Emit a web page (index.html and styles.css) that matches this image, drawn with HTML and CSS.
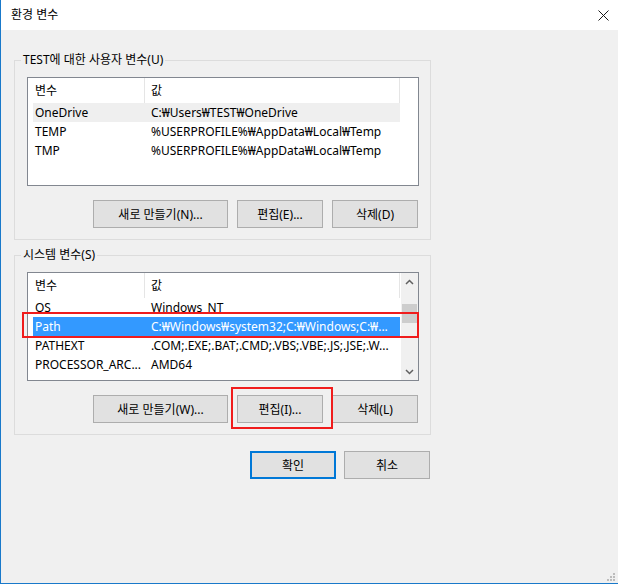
FILE: index.html
```html
<!DOCTYPE html>
<html lang="ko">
<head>
    <meta charset="UTF-8">
    <title>환경 변수</title>
    <link rel="stylesheet" href="styles.css">
</head>
<body>
    <div class="window">
        <div class="titlebar">
            <span class="title">환경 변수</span>
            <svg class="close" width="11" height="11" viewBox="0 0 11 11">
                <path d="M0.5 0.5 L10.5 10.5 M10.5 0.5 L0.5 10.5" stroke="#1a1a1a" stroke-width="1" fill="none"/>
            </svg>
        </div>
        <div class="content">
            <fieldset class="group">
                <legend>TEST에 대한 사용자 변수(U)</legend>
                <div class="list">
                    <div class="list-main">
                        <div class="head">
                            <span class="c1">변수</span>
                            <span class="c2">값</span>
                        </div>
                        <div class="row inactive">
                            <span class="c1">OneDrive</span>
                            <span class="c2">C:₩Users₩TEST₩OneDrive</span>
                        </div>
                        <div class="row">
                            <span class="c1">TEMP</span>
                            <span class="c2">%USERPROFILE%₩AppData₩Local₩Temp</span>
                        </div>
                        <div class="row">
                            <span class="c1">TMP</span>
                            <span class="c2">%USERPROFILE%₩AppData₩Local₩Temp</span>
                        </div>
                    </div>
                </div>
                <div class="btn-row">
                    <button class="btn wide">새로 만들기(N)...</button>
                    <button class="btn">편집(E)...</button>
                    <button class="btn">삭제(D)</button>
                </div>
            </fieldset>

            <fieldset class="group">
                <legend>시스템 변수(S)</legend>
                <div class="list">
                    <div class="list-main">
                        <div class="head">
                            <span class="c1">변수</span>
                            <span class="c2">값</span>
                        </div>
                        <div class="row">
                            <span class="c1">OS</span>
                            <span class="c2">Windows_NT</span>
                        </div>
                        <div class="row selected">
                            <span class="c1">Path</span>
                            <span class="c2">C:₩Windows₩system32;C:₩Windows;C:₩...</span>
                        </div>
                        <div class="row">
                            <span class="c1">PATHEXT</span>
                            <span class="c2">.COM;.EXE;.BAT;.CMD;.VBS;.VBE;.JS;.JSE;.W...</span>
                        </div>
                        <div class="row">
                            <span class="c1">PROCESSOR_ARC...</span>
                            <span class="c2">AMD64</span>
                        </div>
                    </div>
                    <div class="vscroll">
                        <div class="arrow">
                            <svg width="9" height="6" viewBox="0 0 9 6"><polyline points="1,5 4.5,1.5 8,5" fill="none" stroke="#606060" stroke-width="1.5"/></svg>
                        </div>
                        <div class="track">
                            <div class="thumb"></div>
                        </div>
                        <div class="arrow">
                            <svg width="9" height="6" viewBox="0 0 9 6"><polyline points="1,1 4.5,4.5 8,1" fill="none" stroke="#606060" stroke-width="1.5"/></svg>
                        </div>
                    </div>
                </div>
                <div class="btn-row">
                    <button class="btn wide">새로 만들기(W)...</button>
                    <button class="btn">편집(I)...</button>
                    <button class="btn">삭제(L)</button>
                </div>
            </fieldset>

            <div class="dialog-buttons">
                <button class="btn default">확인</button>
                <button class="btn">취소</button>
            </div>
        </div>

        <!-- annotations drawn over the dialog -->
        <div class="mark mark-path"></div>
        <div class="mark mark-edit"></div>

        <svg class="grip" width="8" height="8" viewBox="0 0 8 8">
            <rect x="6" y="0" width="2" height="2" fill="#bcbcbc"/>
            <rect x="3" y="3" width="2" height="2" fill="#bcbcbc"/>
            <rect x="6" y="3" width="2" height="2" fill="#bcbcbc"/>
            <rect x="0" y="6" width="2" height="2" fill="#bcbcbc"/>
            <rect x="3" y="6" width="2" height="2" fill="#bcbcbc"/>
            <rect x="6" y="6" width="2" height="2" fill="#bcbcbc"/>
        </svg>
    </div>
</body>
</html>
```

FILE: styles.css
```css
body {
    margin: 0;
    font-family: "Noto Sans", "Noto Sans CJK KR", sans-serif;
    font-size: 12px;
    color: #000;
    background-color: #f0f0f0;
}
.window {
    position: relative;
    width: 618px;
    height: 584px;
    box-sizing: border-box;
    border-left: 1px solid #1979ca;
    border-bottom: 1px solid #1979ca;
    background-color: #f0f0f0;
}
.titlebar {
    height: 30px;
    background-color: #fff;
    display: flex;
    align-items: center;
    justify-content: space-between;
    padding: 0 9px 0 10px;
}
.title {
    line-height: 16px;
}
.close {
    display: block;
    margin-top: 1px;
}
.content {
    padding: 22px 0 0 13px;
}
.group {
    width: 417px;
    box-sizing: border-box;
    margin: 0;
    min-width: 0;
    padding: 9px 11px 11px 12px;
    border: 1px solid #dcdcdc;
}
.group + .group {
    margin-top: 7px;
}
.group legend {
    padding: 0 2px;
    margin-left: -6px;
    line-height: 16px;
}
.list {
    height: 109px;
    box-sizing: border-box;
    border: 1px solid #828790;
    background-color: #fff;
    display: flex;
    overflow: hidden;
}
.list-main {
    width: 373px;
    flex: none;
    overflow: hidden;
}
.head {
    display: flex;
    width: 372px;
    height: 25px;
    line-height: 26px;
    box-sizing: border-box;
    border-right: 1px solid #e5e5e5;
}
.head .c1 {
    width: 117px;
    box-sizing: border-box;
    padding-left: 7px;
    border-right: 1px solid #e5e5e5;
}
.head .c2 {
    padding-left: 6px;
}
.row {
    display: flex;
    width: 367px;
    height: 19px;
    line-height: 19px;
    margin-left: 5px;
    white-space: nowrap;
}
.row .c1 {
    width: 112px;
    flex: none;
    box-sizing: border-box;
    padding-left: 2px;
    overflow: hidden;
}
.row .c2 {
    flex: 1;
    padding-left: 6px;
    overflow: hidden;
}
.row.inactive {
    background-color: #efefef;
}
.row.selected {
    background-color: #3399ff;
    color: #fff;
}
.vscroll {
    width: 17px;
    flex: none;
    background-color: #f0f0f0;
    display: flex;
    flex-direction: column;
}
.arrow {
    height: 17px;
    display: flex;
    align-items: center;
    justify-content: center;
}
.arrow svg {
    display: block;
}
.track {
    flex: 1;
}
.thumb {
    height: 19px;
    margin: 14px 1px 0 1px;
    background-color: #cdcdcd;
}
.btn-row {
    display: flex;
    justify-content: flex-end;
    gap: 9px;
    margin-top: 14px;
    padding-right: 1px;
}
.btn {
    width: 86px;
    height: 28px;
    box-sizing: border-box;
    border: 1px solid #adadad;
    background-color: #e1e1e1;
    font-family: inherit;
    font-size: 12px;
    color: #000;
    padding: 0;
}
.btn.wide {
    width: 135px;
}
.btn.default {
    border: 2px solid #0078d7;
}
.dialog-buttons {
    width: 417px;
    display: flex;
    justify-content: flex-end;
    gap: 8px;
    margin-top: 16px;
    padding-right: 1px;
    box-sizing: border-box;
}
.mark {
    position: absolute;
    box-sizing: border-box;
    border: 2px solid #f01c1c;
}
.mark-path {
    left: 21px;
    top: 312px;
    width: 397px;
    height: 26px;
}
.mark-edit {
    left: 230px;
    top: 387px;
    width: 102px;
    height: 42px;
}
.grip {
    position: absolute;
    left: 606px;
    top: 573px;
}
```
